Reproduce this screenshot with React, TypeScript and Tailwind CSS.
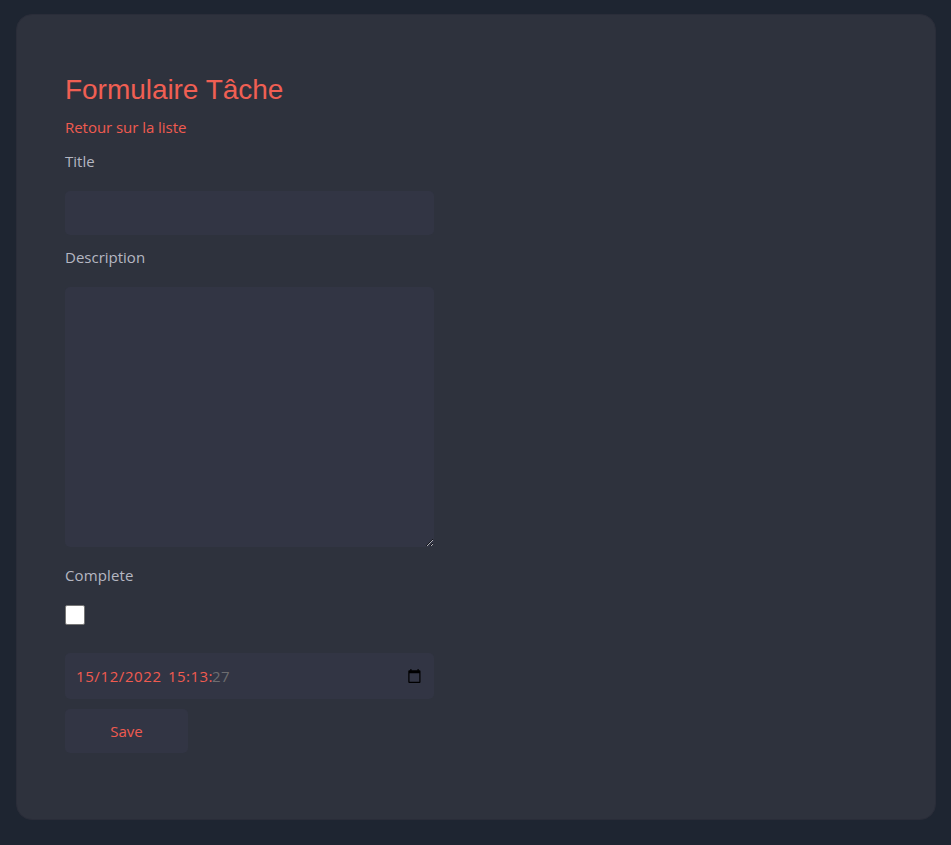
export default function App() {
  return (
    <main className="h-[845px] bg-[#1e2531] px-4 pt-[14px] font-['Open_Sans','Noto_Sans',sans-serif] text-[15px] leading-6 text-[#b5b7c2]">
      <form className="flex h-[806px] w-[920px] flex-col items-start rounded-2xl border border-[#2a2d39] bg-[#2e323d] px-12 pt-[58px]">
        <h1 className="h-[34px] whitespace-nowrap font-['Liberation_Sans',Arial,sans-serif] text-[28px] leading-[34px] tracking-[-0.04px] text-[#f05f53]">
          Formulaire Tâche
        </h1>
        <a href="#" className="mt-2 h-6 whitespace-nowrap tracking-[-0.04px] text-[#f05b50]">
          Retour sur la liste
        </a>
        <label htmlFor="title" className="mt-[10px] h-6">Title</label>
        <input id="title" className="mt-[18px] h-11 w-[369px] rounded-[5px] bg-[#323544] px-3 text-[#f05b50] outline-none" />
        <label htmlFor="description" className="mt-[10px] h-6">Description</label>
        <textarea id="description" className="mt-[18px] h-[260px] w-[369px] shrink-0 rounded-[5px] bg-[#323544] p-3 text-[#f05b50] outline-none" />
        <label htmlFor="complete" className="mt-4 h-6 tracking-[0.12px]">Complete</label>
        <input id="complete" type="checkbox" className="mt-[18px] size-5 appearance-none rounded-[2px] border border-[#767676] bg-white" />
        <div className="mt-7 flex h-[46px] w-[369px] items-center rounded-[5px] bg-[#323544] pr-[12px] pl-[11px]">
          <span className="w-[92px] whitespace-nowrap tracking-[0.6px] text-[#f05b50]">15/12/2022</span>
          <span className="w-11 tracking-[0.45px] text-[#f05b50]">15:13:</span>
          <span className="tracking-[0.3px] text-[#6d6d70]">27</span>
          <svg className="ml-auto h-[15px] w-[14px]" viewBox="0 0 14 15" fill="#000">
            <path fillRule="evenodd" d="M2.3 0H3.5V1.2H9.5V0H10.7V1.2H11.5Q12.5 1.2 12.5 2.2V13Q12.5 14 11.5 14H1.3Q.3 14 .3 13V2.2Q.3 1.2 1.3 1.2H2.3ZM1.5 4.2V12.8H11.3V4.2Z" />
          </svg>
        </div>
        <button type="button" className="mt-[10px] h-11 w-[123px] rounded-[5px] bg-[#323544] text-[#f05b50]">Save</button>
      </form>
    </main>
  );
}
